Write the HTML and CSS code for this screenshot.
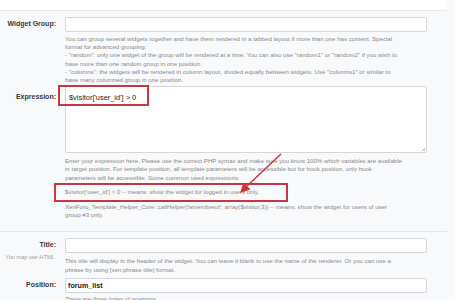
FILE: index.html
```html
<!DOCTYPE html>
<html>
<head>
<meta charset="utf-8">
<link rel="stylesheet" href="styles.css">
</head>
<body>
<div class="top"></div>
<div class="form">
  <div class="row row-group">
    <div class="lbl"><span class="name">Widget Group:</span></div>
    <div class="ctl">
      <div class="input"></div>
      <p class="hint">You can group several widgets together and have them rendered in a tabbed layout if more than one has content. Special<br>format for advanced grouping:<br>- "random": only one widget of the group will be rendered at a time. You can also use "random1" or "random2" if you wish to<br>have more than one random group in one position.<br>- "columns": the widgets will be rendered in column layout, divided equally between widgets. Use "columns1" or similar to<br>have many columned group in one position.</p>
    </div>
  </div>
  <div class="row row-expr">
    <div class="lbl"><span class="name">Expression:</span></div>
    <div class="ctl">
      <div class="textarea"><span class="code">$visitor['user_id'] &gt; 0</span><span class="grip"></span></div>
      <p class="hint">Enter your expression here. Please use the correct PHP syntax and make sure you know 100% which variables are available<br>in target position. For template position, all template parameters will be accessible but for hook position, only hook<br>parameters will be accessible. Some common used expressions:</p>
      <p class="hint example">$visitor['user_id'] &gt; 0 -- means: show the widget for logged in users only.</p>
      <p class="hint helper">XenForo_Template_Helper_Core::callHelper('ismemberof', array($visitor,3)) -- means: show the widget for users of user<br>group #3 only.</p>
    </div>
  </div>
  <div class="sep"></div>
  <div class="row row-title">
    <div class="lbl"><span class="name">Title:</span><span class="sub">You may use HTML.</span></div>
    <div class="ctl">
      <div class="input"></div>
      <p class="hint">This title will display in the header of the widget. You can leave it blank to use the name of the renderer. Or you can use a<br>phrase by using [xen:phrase title] format.</p>
    </div>
  </div>
  <div class="row row-pos">
    <div class="lbl"><span class="name">Position:</span></div>
    <div class="ctl">
      <div class="input"><span class="val">forum_list</span></div>
      <p class="hint">There are three types of positions:</p>
    </div>
  </div>
</div>
<div class="mark mark-expr"></div>
<div class="mark mark-example"></div>
<svg class="arrow" width="455" height="300" viewBox="0 0 455 300">
  <line x1="281" y1="154" x2="247" y2="186" stroke="#d1333c" stroke-width="1.6"/>
  <polygon points="240,193 243.5,182.5 250.5,189.5" fill="#d1333c"/>
</svg>
</body>
</html>
```
FILE: styles.css
```css
html, body {
  margin: 0;
  padding: 0;
}
body {
  width: 455px;
  height: 300px;
  overflow: hidden;
  background: #f8f9fb;
  font-family: "Liberation Sans", Arial, sans-serif;
  color: #333;
  position: relative;
}
.top {
  height: 10px;
  background: #ffffff;
  border-bottom: 1px solid #e6e9ef;
  margin-right: 8px;
}
.form {
  display: flex;
  flex-direction: column;
}
.row {
  display: flex;
  gap: 9px;
}
.lbl {
  width: 56px;
  flex: none;
  display: flex;
  flex-direction: column;
  align-items: flex-end;
}
.name {
  font-weight: bold;
  font-size: 7px;
  color: #3a3a3a;
  line-height: 14px;
  white-space: nowrap;
}
.sub {
  font-size: 5.6px;
  font-style: italic;
  color: #999;
  line-height: 7px;
  margin-top: 2px;
  white-space: nowrap;
}
.ctl {
  width: 362px;
  flex: none;
}
.input {
  height: 13px;
  border: 1px solid #d3d6db;
  border-radius: 2px;
  background: #fff;
  display: flex;
  align-items: center;
  padding-left: 2px;
}
.val {
  font-weight: bold;
  font-size: 7.2px;
  color: #222;
}
.textarea {
  height: 67px;
  border: 1px solid #d3d6db;
  border-radius: 2px;
  background: #fff;
  position: relative;
  padding: 7px 3px;
  box-sizing: border-box;
}
.code {
  font-size: 7.4px;
  color: #222;
  display: block;
  line-height: 8px;
}
.grip {
  position: absolute;
  right: 1px;
  bottom: 1px;
  width: 4px;
  height: 4px;
  background: linear-gradient(135deg, transparent 55%, #aaa 55%, #aaa 65%, transparent 65%, transparent 80%, #aaa 80%);
}
.hint {
  margin: 3px 0 0 0;
  font-size: 6.1px;
  line-height: 8.2px;
  color: #8a8a8a;
  white-space: nowrap;
}
.row-group {
  margin-top: 6px;
}
.row-expr {
  margin-top: 2px;
}
.row-expr .lbl .name {
  line-height: 22px;
}
.row-expr .textarea + .hint {
  margin-top: 4px;
}
.example {
  margin-top: 6px;
}
.helper {
  margin-top: 7px;
}
.sep {
  height: 1px;
  background: #e2e8f0;
  margin: 12px 8px 6px 0;
}
.row-title .hint {
  margin-top: 4px;
}
.row-pos {
  margin-top: 4px;
}
.row-pos .hint {
  margin-top: 2px;
}
.mark {
  position: absolute;
  border: 2px solid #c8363f;
  box-sizing: border-box;
}
.mark-expr {
  left: 58px;
  top: 85px;
  width: 91px;
  height: 21px;
}
.mark-example {
  left: 54px;
  top: 183px;
  width: 234px;
  height: 19px;
}
.arrow {
  position: absolute;
  left: 0;
  top: 0;
  pointer-events: none;
}
```
